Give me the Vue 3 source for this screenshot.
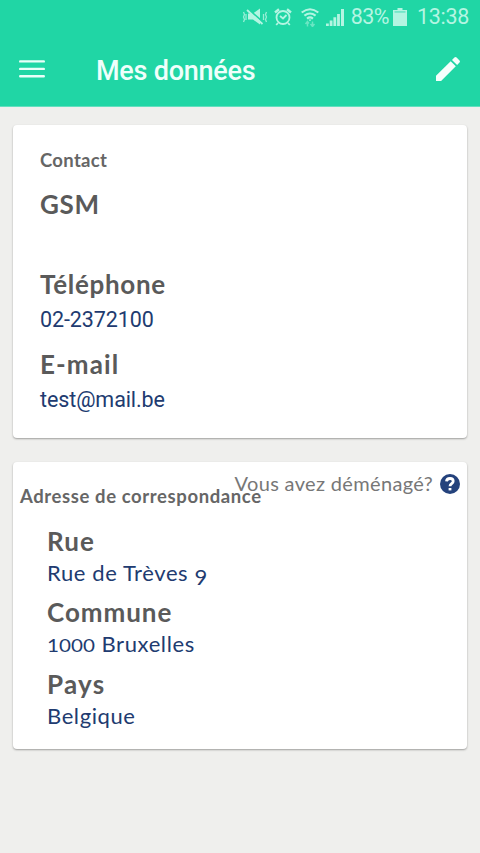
<script setup>
const contact = [
  { label: 'GSM', value: '', cls: 'gsm' },
  { label: 'Téléphone', value: '02-2372100', cls: 'tel' },
  { label: 'E-mail', value: 'test@mail.be', cls: 'mail' },
]
</script>

<template>
  <div class="screen">
    <header>
      <div class="status">
        <svg class="mute" width="26" height="18" viewBox="0 0 26 18">
          <path d="M6 5.5h5l7-5v16l-7-5H6z" />
          <path class="cut" d="M6 1l16 14" />
          <path class="line" d="M5 2l15.500 14" />
          <path class="line wave" d="M1.500 4l1 2.500-1 2.500 1 2.500-1 2.500M4 6v6M24.500 4l-1 2.500 1 2.500-1 2.500 1 2.500M21.500 6v6" />
        </svg>
        <svg class="alarm" width="18" height="18" viewBox="0 0 18 18">
          <path class="line bell" d="M1 4.5l4-3.300M17 4.500l-4-3.300" />
          <path class="line" d="M4 15l-1.800 2M14 15l1.800 2M6 8l3 2.500L12.500 7" />
          <circle class="line" cx="9" cy="9.500" r="6.500" />
        </svg>
        <svg class="wifi" width="18" height="19" viewBox="0 0 18 19">
          <path class="line arc" d="M.7 4.500q8.300-6.500 16.600 0M3.400 7.700q5.600-4.400 11.200 0M6 10.600q3-2.300 6 0" />
          <path d="M7.400 11.500h3.200L9 13.300z" />
          <path class="line faint" d="M6.500 18.500v-5m-2 2.500l2-2.500 1.500 2M11.500 13.500v5M9.500 16l2 2.500 2-2.500" />
        </svg>
        <svg class="signal" width="18" height="17" viewBox="0 0 18 17">
          <path d="M0 14.500h2.800v2.500H0zM3.700 11.500h2.800V17H3.700zM7.400 8.300h2.800V17H7.400zM11.100 5h2.800v12h-2.800zM15 0h3v17h-3z" />
        </svg>
        <span class="percent">83%</span>
        <svg class="battery" width="14" height="18" viewBox="0 0 14 18">
          <path d="M4.500 0h5v2H14v16H0V2h4.500z" />
          <path class="empty" d="M1.500 3h11v1.800h-11z" />
        </svg>
        <span class="time">13:38</span>
      </div>
      <div class="bar">
        <svg class="menu" width="26" height="20" viewBox="0 0 26 20">
          <path d="M1.200 2.400h23.600M1.200 9.900h23.600M1.200 17.200h23.600" />
        </svg>
        <h1>Mes données</h1>
        <svg class="pencil" width="26" height="26" viewBox="0 0 26 26">
          <path d="M1 25v-5.200L15.700 5.200l5.100 5.100L6.100 25zM17 3.900l2.400-2.400q1.100-1 2.200 0l2.900 2.900q1 1.100 0 2.200L22.100 9z" />
        </svg>
      </div>
    </header>

    <main>
      <section class="card contact">
        <h2>Contact</h2>
        <div v-for="f in contact" :key="f.label" class="field">
          <div class="label" :class="f.cls">{{ f.label }}</div>
          <div class="value" :class="f.cls">{{ f.value }}</div>
        </div>
      </section>

      <section class="card address">
        <div class="top">
          <h2>Adresse de correspondance</h2>
          <div class="moved">
            <span>Vous avez déménagé?</span>
            <svg width="20" height="20" viewBox="0 0 20 20">
              <circle cx="10" cy="10" r="10" />
              <path d="M6.500 7.300C6.900 3.700 13 3.500 13.200 7.100c.1 2.500-3.200 2.500-3.200 5.100" />
              <path d="M10 14v2.400" />
            </svg>
          </div>
        </div>
        <div class="field">
          <div class="label rue">Rue</div>
          <div class="value street">Rue de Trèves <span class="nine">9</span></div>
        </div>
        <div class="field">
          <div class="label commune">Commune</div>
          <div class="value city"><span class="zip">1000</span> Bruxelles</div>
        </div>
        <div class="field">
          <div class="label pays">Pays</div>
          <div class="value country">Belgique</div>
        </div>
      </section>
    </main>
  </div>
</template>

<style>
body { margin: 0; background: #efefed; }
</style>

<style scoped>
.screen { width: 480px; height: 853px; background: #efefed; overflow: hidden; font-family: Lato, sans-serif; }
h1, h2 { margin: 0; }
svg { display: block; flex: none; }
header { height: 107px; box-sizing: border-box; background: #20d6a5; border-bottom: 1px solid #62dfbf; font-family: Roboto, sans-serif; }
.status { height: 34px; display: flex; align-items: center; justify-content: flex-end; padding-right: 11px; box-sizing: border-box; color: #b4f5e2; font-size: 21.5px; line-height: 34px; }
.status svg { fill: #b4f5e2; }
.status .line { fill: none; stroke: #b4f5e2; stroke-width: 1.8; }
.status .wave { stroke-width: 1.3; opacity: .8; }
.status .bell { stroke-width: 2.4; }
.status .arc { stroke-width: 2.1; }
.status .faint { opacity: .5; stroke-width: 1.5; }
.status .cut { stroke: #20d6a5; stroke-width: 2; }
.status .empty { fill: #74e7c9; }
.alarm { margin-left: 6px; }
.wifi { margin-left: 9px; }
.signal { margin-left: 7px; }
.percent { margin-left: 7px; letter-spacing: -.6px; }
.battery { margin-left: 4px; }
.time { margin-left: 10px; letter-spacing: -.3px; }
.bar { height: 72px; display: flex; align-items: center; padding: 0 19px; }
.menu { stroke: #e9fff9; stroke-width: 2.4; stroke-linecap: round; margin-top: -2px; }
h1 { flex: 1; margin-left: 51px; color: #effffb; font-size: 27px; line-height: 36px; font-weight: 500; letter-spacing: -.25px; padding-top: 1px; }
.pencil { fill: #f4fffc; margin-top: -2px; }
main { padding: 18px 13px; display: flex; flex-direction: column; gap: 24px; }
.card { background: #fff; border-radius: 4px; box-shadow: 0 1px 2px rgba(0, 0, 0, .34); box-sizing: border-box; }
.contact { height: 313px; padding: 22px 27px 0; }
h2 { font-size: 18.5px; line-height: 24px; font-weight: 700; color: #666; letter-spacing: .3px; }
.label { font-size: 26px; line-height: 32px; height: 32px; font-weight: 700; color: #5a5a5a; letter-spacing: .7px; }
.label.mail, .label.rue { letter-spacing: 1.1px; }
.label.commune { letter-spacing: .95px; }
.label.pays { letter-spacing: 1.3px; }
.value { color: #213b70; white-space: nowrap; }
.contact h2 { margin-bottom: 17px; padding-top: 1px; height: 23px; }
.contact .field { height: 80px; }
.contact .value { font-family: Roboto, sans-serif; font-size: 21.5px; line-height: 32px; margin-top: 4px; letter-spacing: -.1px; }
.address { height: 287px; padding: 9px 7px 0; }
.top { display: grid; height: 54px; align-items: start; }
.top h2 { grid-area: 1 / 1; margin-top: 13px; letter-spacing: .6px; }
.moved { grid-area: 1 / 1; justify-self: end; display: flex; gap: 7px; align-items: center; font-size: 20px; line-height: 24px; letter-spacing: .34px; color: #777; }
.moved svg { margin-top: 2px; }
.moved circle { fill: #24427c; }
.moved path { fill: none; stroke: #fff; stroke-width: 2.8; }
.address .field { height: 71.3px; padding-left: 27px; }
.address .value { font-size: 22px; line-height: 28px; height: 28px; margin-top: 2px; letter-spacing: .6px; }
.nine { display: inline-block; line-height: 1; transform: translateY(4px); }
.zip { display: inline-block; font-size: 16.5px; line-height: 1; letter-spacing: 0; transform: scaleX(1.25); transform-origin: left; margin-right: 10px; }
</style>
